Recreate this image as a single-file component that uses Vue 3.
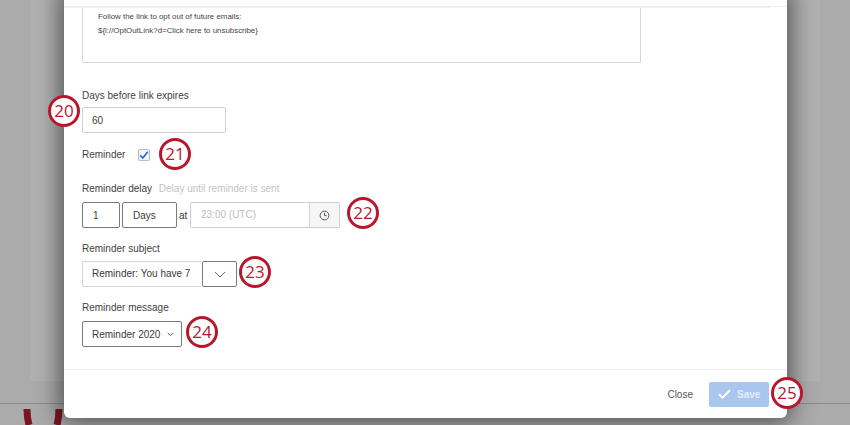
<template>
  <div class="page">
    <div class="backdrop">
      <div class="panel"></div>
      <div class="rule"></div>
      <svg class="logo-bits" width="90" height="20" viewBox="0 0 90 20">
        <path d="M27 0Q27 9 29 16M59 0Q59 9 57 16" fill="none" stroke="#7c1420" stroke-width="7" />
      </svg>
    </div>

    <section class="modal">
      <div class="scroll-area">
        <div class="top-line"></div>
        <div class="message-box">
          <p>Follow the link to opt out of future emails:</p>
          <p>${l://OptOutLink?d=Click here to unsubscribe}</p>
        </div>

        <div class="field days-field">
          <label>Days before link expires</label>
          <input class="text-input days-input" value="60" readonly />
        </div>

        <div class="reminder-row">
          <label>Reminder</label>
          <span class="checkbox">
            <svg width="10" height="10" viewBox="0 0 10 10">
              <path d="M1.2 5.4 3.8 8 8.8 1.8" fill="none" stroke="#1f6fd6" stroke-width="1.7" />
            </svg>
          </span>
        </div>

        <div class="field delay-field">
          <label>Reminder delay <span class="hint">Delay until reminder is sent</span></label>
          <div class="delay-controls">
            <div class="box num-box">1</div>
            <div class="box unit-box">Days</div>
            <span class="at">at</span>
            <div class="time-group">
              <div class="time-value">23:00 (UTC)</div>
              <div class="time-icon">
                <svg width="11" height="11" viewBox="0 0 11 11">
                  <circle cx="5.5" cy="5.5" r="4.4" fill="none" stroke="#555" stroke-width="1" />
                  <path d="M5.5 2.8v2.9h2.2" fill="none" stroke="#555" stroke-width="1" />
                </svg>
              </div>
            </div>
          </div>
        </div>

        <div class="field subject-field">
          <label>Reminder subject</label>
          <div class="subject-group">
            <div class="subject-value">Reminder: You have 7</div>
            <div class="box subject-arrow">
              <svg width="12" height="7" viewBox="0 0 12 7">
                <path d="M1 1l5 5 5-5" fill="none" stroke="#666" stroke-width="1" />
              </svg>
            </div>
          </div>
        </div>

        <div class="field message-field">
          <label>Reminder message</label>
          <div class="box message-select">
            <span>Reminder 2020</span>
            <svg width="7" height="5" viewBox="0 0 7 5">
              <path d="M.7.9l2.8 2.8L6.3.9" fill="none" stroke="#555" stroke-width="1" />
            </svg>
          </div>
        </div>
      </div>

      <footer class="modal-footer">
        <span class="close">Close</span>
        <div class="save">
          <svg width="13" height="10" viewBox="0 0 13 10">
            <path d="M1 5.2 4.6 8.6 12 1.2" fill="none" stroke="#fff" stroke-width="2" />
          </svg>
          <span>Save</span>
        </div>
      </footer>
    </section>

    <div
      v-for="c in callouts"
      :key="c.n"
      class="callout"
      :style="{ left: c.x - 16 + 'px', top: c.y - 16 + 'px' }"
    >{{ c.n }}</div>
  </div>
</template>

<script setup>
const callouts = [
  { n: 20, x: 64, y: 111 },
  { n: 21, x: 175, y: 154 },
  { n: 22, x: 363, y: 213 },
  { n: 23, x: 255, y: 272 },
  { n: 24, x: 202, y: 332 },
  { n: 25, x: 787, y: 393 },
]
</script>

<style>
html, body {
  margin: 0;
  overflow: hidden;
}
</style>

<style scoped>
.page {
  position: relative;
  width: 850px;
  height: 425px;
  overflow: hidden;
  background: #ababab;
  font-family: "Liberation Sans", Arial, sans-serif;
  color: #3a3a3a;
}

.backdrop {
  position: absolute;
  inset: 0;
}
.panel {
  position: absolute;
  left: 30px;
  top: -10px;
  width: 790px;
  height: 391px;
  background: #b1b1b1;
}
.rule {
  position: absolute;
  left: 0;
  right: 0;
  top: 403px;
  height: 1px;
  background: #8c8c8c;
}
.logo-bits {
  position: absolute;
  left: 0;
  top: 409px;
}

.modal {
  position: absolute;
  left: 64px;
  top: -8px;
  width: 723px;
  height: 426px;
  background: #fff;
  border-radius: 0 0 6px 6px;
  box-shadow: 0 0 24px 4px rgba(0, 0, 0, 0.55);
  display: flex;
  flex-direction: column;
}

.scroll-area {
  flex: 1;
  padding: 0 0 0 18px;
  position: relative;
}
.top-line {
  position: absolute;
  left: 0;
  right: 0;
  top: 14px;
  height: 1px;
  background: #ececec;
}
.top-line::after {
  content: "";
  position: absolute;
  left: 0;
  right: 17px;
  top: 1px;
  height: 1px;
  background: #f0f0f0;
}

.message-box {
  width: 559px;
  height: 56px;
  margin-top: 15px;
  padding: 5px 0 0 15px;
  box-sizing: border-box;
  border: 1px solid #d6d6d6;
  border-top: 0;
  border-radius: 0 0 2px 2px;
  font-size: 7.9px;
  color: #444;
}
.message-box p {
  margin: 0 0 4px;
  line-height: 10px;
}

.field label,
.reminder-row label {
  display: block;
  font-size: 10px;
  line-height: 14px;
  color: #424242;
}
.hint {
  margin-left: 4px;
  color: #c4c4c4;
}

.days-field { margin-top: 26px; }
.text-input {
  display: block;
  box-sizing: border-box;
  margin-top: 4px;
  font: inherit;
  font-size: 10px;
  color: #3a3a3a;
  border: 1px solid #cfcfcf;
  border-radius: 2px;
  outline: none;
  background: #fff;
}
.days-input {
  width: 144px;
  height: 26px;
  padding: 0 9px;
}

.reminder-row {
  display: flex;
  align-items: center;
  gap: 13px;
  height: 14px;
  margin-top: 15px;
}
.checkbox {
  width: 12px;
  height: 12px;
  box-sizing: border-box;
  border: 1px solid #b9bdc4;
  border-radius: 2px;
  background: #f4f6fa;
  display: flex;
  align-items: center;
  justify-content: center;
}

.box {
  box-sizing: border-box;
  border: 1px solid #7b7b7b;
  border-radius: 2px;
  background: #fff;
  font-size: 10px;
  display: flex;
  align-items: center;
}

.delay-field { margin-top: 20px; }
.delay-controls {
  display: flex;
  align-items: center;
  margin-top: 6px;
  height: 26px;
  font-size: 10px;
}
.num-box {
  width: 38px;
  height: 26px;
  padding-left: 10px;
}
.unit-box {
  width: 55px;
  height: 26px;
  margin-left: 2px;
  padding-left: 10px;
}
.at {
  width: 11px;
  margin-left: 2px;
}
.time-group {
  display: flex;
  width: 150px;
  height: 26px;
  box-sizing: border-box;
  border: 1px solid #cfcfcf;
  border-radius: 2px;
}
.time-value {
  flex: 1;
  padding-left: 10px;
  line-height: 24px;
  color: #bdbdbd;
}
.time-icon {
  width: 29px;
  border-left: 1px solid #d8d8d8;
  background: #f6f6f6;
  display: flex;
  align-items: center;
  justify-content: center;
}

.subject-field { margin-top: 14px; }
.subject-group {
  display: flex;
  margin-top: 5px;
  height: 26px;
}
.subject-value {
  width: 120px;
  box-sizing: border-box;
  padding-left: 9px;
  border: 1px solid #d4d4d4;
  border-right: 0;
  border-radius: 2px 0 0 2px;
  font-size: 10px;
  line-height: 24px;
}
.subject-arrow {
  width: 35px;
  justify-content: center;
}

.message-field { margin-top: 14px; }
.message-select {
  width: 100px;
  height: 26px;
  margin-top: 6px;
  padding-left: 9px;
  gap: 7px;
}

.modal-footer {
  height: 48px;
  border-top: 1px solid #ececec;
  display: flex;
  align-items: center;
  justify-content: flex-end;
  padding-right: 18px;
  gap: 16px;
  font-size: 10px;
}
.close { color: #555; }
.save {
  width: 60px;
  height: 25px;
  box-sizing: border-box;
  padding-left: 9px;
  border-radius: 2px;
  background: #a9c6ee;
  color: #e4edf9;
  font-weight: 700;
  display: flex;
  align-items: center;
  gap: 6px;
}

.callout {
  position: absolute;
  width: 32px;
  height: 32px;
  box-sizing: border-box;
  border: 3px solid #b9162c;
  border-radius: 50%;
  background: #fff;
  color: #b9162c;
  font-family: "Open Sans", sans-serif;
  font-size: 17px;
  line-height: 25px;
  text-align: center;
}
</style>
